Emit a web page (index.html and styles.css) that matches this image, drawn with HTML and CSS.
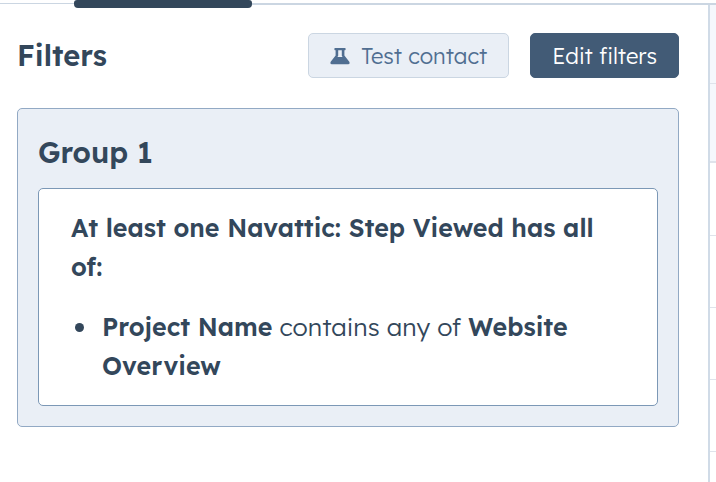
FILE: index.html
```html
<!DOCTYPE html>
<html lang="en">
<head>
<meta charset="utf-8">
<meta name="viewport" content="width=device-width, initial-scale=1">
<title>Filters</title>
<link rel="stylesheet" href="styles.css">
</head>
<body>
<div class="tabs">
  <div class="tab-line tab-before"></div>
  <div class="tab-active"></div>
  <div class="tab-line tab-after"></div>
</div>
<div class="layout">
  <main class="panel">
    <header class="panel-header">
      <h1 class="heading">Filters</h1>
      <button class="button button-secondary" type="button">
        <svg class="icon" viewBox="0 0 20 18" aria-hidden="true">
          <path fill="currentColor" fill-rule="evenodd" d="M5 1h10q.6 0 .6.600v1q0 .600-.6.600h-.600v5.300l4.900 6.200q1 2.300-1.200 2.500H1.900Q-.3 17 .7 14.700l4.900-6.200V3.200H5q-.6 0-.6-.600v-1q0-.600.6-.600ZM8.200 3.200v5.600L7.400 10h5.200L11.800 8.800V3.200Z"/>
        </svg>
        Test contact
      </button>
      <button class="button button-primary" type="button">Edit filters</button>
    </header>
    <section class="group">
      <h2 class="heading">Group 1</h2>
      <div class="card">
        <p class="rule"><strong>At least one Navattic: Step Viewed has all of:</strong></p>
        <ul class="conditions">
          <li><strong>Project Name</strong> contains any of <strong>Website Overview</strong></li>
        </ul>
      </div>
    </section>
  </main>
  <aside class="records">
    <div class="cell cell-head"></div>
    <div class="cell cell-head cell-last"></div>
    <div class="cell"></div>
    <div class="cell"></div>
    <div class="cell"></div>
    <div class="cell"></div>
  </aside>
</div>
</body>
</html>
```
FILE: styles.css
```css
* {
  box-sizing: border-box;
}

body {
  margin: 0;
  min-height: 100vh;
  display: flex;
  flex-direction: column;
  background: #fff;
  color: #33475b;
  font-family: "Lexend Deca", Lexend, Inter, sans-serif;
  font-size: 25px;
  font-weight: 300;
  line-height: 39px;
}

.tabs {
  display: flex;
  height: 5px;
}

.tab-line {
  height: 5px;
  border-bottom: 2px solid #cbd6e2;
}

.tab-before {
  width: 74px;
  height: 4px;
  border-bottom-width: 1px;
}

.tab-active {
  width: 178px;
  height: 8px;
  border-radius: 3px 3px 4px 4px;
  background: #33475b;
}

.tab-after {
  flex: 1;
}

.layout {
  flex: 1;
  display: flex;
}

.panel {
  flex: 1;
  padding: 28px 29px 28px 17px;
}

.panel-header {
  display: flex;
  align-items: center;
  gap: 21px;
  margin-bottom: 30px;
}

.heading {
  margin: 0;
  font-size: 29px;
  line-height: 45px;
  font-weight: 600;
}

.panel-header .heading {
  flex: 1;
}

.button {
  display: flex;
  align-items: center;
  justify-content: center;
  gap: 11px;
  height: 45px;
  padding: 0 21px;
  border: 1px solid #425b76;
  border-radius: 5px;
  font-family: inherit;
  font-size: 22px;
  font-weight: 300;
  line-height: 28px;
  white-space: nowrap;
}

.button-primary {
  background: #425b76;
  color: #fff;
}

.button-secondary {
  border-color: #cbd6e2;
  background: #eaeff6;
  color: #506e91;
}

.icon {
  width: 20px;
  height: 18px;
}

.group {
  padding: 21px 20px 20px;
  border: 1px solid #92a9c4;
  border-radius: 5px;
  background: #eaeff6;
}

.group .heading {
  margin-bottom: 13px;
}

.card {
  padding: 19px 32px 20px;
  border: 1px solid #7c98b6;
  border-radius: 5px;
  background: #fff;
}

.rule {
  margin: 0 0 21px;
}

strong {
  font-weight: 600;
}

.conditions {
  margin: 0;
  padding-left: 31px;
  list-style: none;
}

.conditions li::before {
  content: "";
  display: inline-block;
  width: 9px;
  height: 9px;
  margin: 0 18px 4px -27px;
  border-radius: 50%;
  background: currentColor;
  vertical-align: middle;
}

.records {
  width: 8px;
  border-left: 2px solid #d0dbe7;
}

.cell {
  height: 72px;
  border-bottom: 1px solid #dfe3eb;
}

.cell-head {
  height: 79px;
  background: #f5f7fc;
}

.cell-last {
  border-bottom-width: 2px;
}

.cell-last + .cell {
  height: 73px;
}
```
